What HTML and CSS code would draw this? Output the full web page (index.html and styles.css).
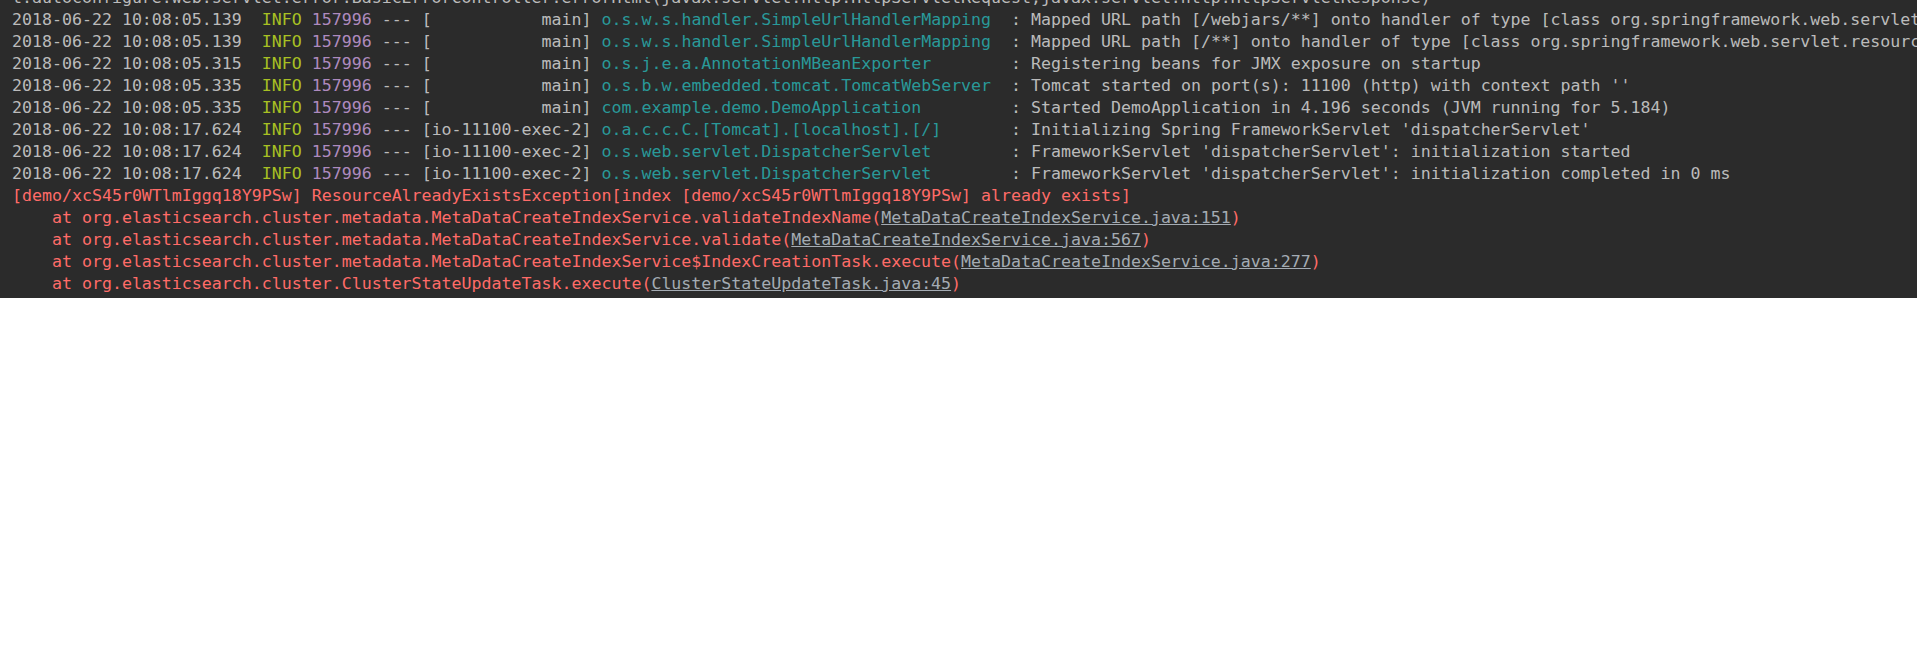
FILE: index.html
```html
<!DOCTYPE html>
<html lang="en">
<head>
    <meta charset="UTF-8">
    <title>Run console</title>
    <link rel="stylesheet" href="styles.css">
</head>
<body>
    <div class="console">
        <div class="log">
            <div class="line">t.autoconfigure.web.servlet.error.BasicErrorController.errorHtml(javax.servlet.http.HttpServletRequest,javax.servlet.http.HttpServletResponse)</div>
            <div class="line">2018-06-22 10:08:05.139  <span class="info">INFO</span> <span class="pid">157996</span> --- [           main] <span class="logger">o.s.w.s.handler.SimpleUrlHandlerMapping </span> : Mapped URL path [/webjars/**] onto handler of type [class org.springframework.web.servlet.resource.ResourceHttpRequestHandler]</div>
            <div class="line">2018-06-22 10:08:05.139  <span class="info">INFO</span> <span class="pid">157996</span> --- [           main] <span class="logger">o.s.w.s.handler.SimpleUrlHandlerMapping </span> : Mapped URL path [/**] onto handler of type [class org.springframework.web.servlet.resource.ResourceHttpRequestHandler]</div>
            <div class="line">2018-06-22 10:08:05.315  <span class="info">INFO</span> <span class="pid">157996</span> --- [           main] <span class="logger">o.s.j.e.a.AnnotationMBeanExporter       </span> : Registering beans for JMX exposure on startup</div>
            <div class="line">2018-06-22 10:08:05.335  <span class="info">INFO</span> <span class="pid">157996</span> --- [           main] <span class="logger">o.s.b.w.embedded.tomcat.TomcatWebServer </span> : Tomcat started on port(s): 11100 (http) with context path ''</div>
            <div class="line">2018-06-22 10:08:05.335  <span class="info">INFO</span> <span class="pid">157996</span> --- [           main] <span class="logger">com.example.demo.DemoApplication        </span> : Started DemoApplication in 4.196 seconds (JVM running for 5.184)</div>
            <div class="line">2018-06-22 10:08:17.624  <span class="info">INFO</span> <span class="pid">157996</span> --- [io-11100-exec-2] <span class="logger">o.a.c.c.C.[Tomcat].[localhost].[/]      </span> : Initializing Spring FrameworkServlet 'dispatcherServlet'</div>
            <div class="line">2018-06-22 10:08:17.624  <span class="info">INFO</span> <span class="pid">157996</span> --- [io-11100-exec-2] <span class="logger">o.s.web.servlet.DispatcherServlet       </span> : FrameworkServlet 'dispatcherServlet': initialization started</div>
            <div class="line">2018-06-22 10:08:17.624  <span class="info">INFO</span> <span class="pid">157996</span> --- [io-11100-exec-2] <span class="logger">o.s.web.servlet.DispatcherServlet       </span> : FrameworkServlet 'dispatcherServlet': initialization completed in 0 ms</div>
            <div class="line error">[demo/xcS45r0WTlmIggq18Y9PSw] ResourceAlreadyExistsException[index [demo/xcS45r0WTlmIggq18Y9PSw] already exists]</div>
            <div class="line error">    at org.elasticsearch.cluster.metadata.MetaDataCreateIndexService.validateIndexName(<a class="src">MetaDataCreateIndexService.java:151</a>)</div>
            <div class="line error">    at org.elasticsearch.cluster.metadata.MetaDataCreateIndexService.validate(<a class="src">MetaDataCreateIndexService.java:567</a>)</div>
            <div class="line error">    at org.elasticsearch.cluster.metadata.MetaDataCreateIndexService$IndexCreationTask.execute(<a class="src">MetaDataCreateIndexService.java:277</a>)</div>
            <div class="line error">    at org.elasticsearch.cluster.ClusterStateUpdateTask.execute(<a class="src">ClusterStateUpdateTask.java:45</a>)</div>
            <div class="line error">    at org.elasticsearch.cluster.service.MasterService.executeTasks(<a class="src">MasterService.java:630</a>)</div>
        </div>
    </div>
</body>
</html>
```

FILE: styles.css
```css
body {
    margin: 0;
    background-color: #ffffff;
    overflow: hidden;
}
.console {
    height: 298px;
    background-color: #2b2b2b;
    overflow: hidden;
    padding: 0 12px;
}
.log {
    margin-top: -13px;
    font-family: 'DejaVu Sans Mono', 'Liberation Mono', monospace;
    font-size: 16.6px;
    line-height: 22px;
    color: #bbbbbb;
}
.line {
    white-space: pre;
    height: 22px;
}
.info {
    color: #a8c023;
}
.pid {
    color: #ae8abe;
}
.logger {
    color: #299999;
}
.error {
    color: #ff6b68;
}
.src {
    color: #a4abb3;
    text-decoration: underline;
}
```
